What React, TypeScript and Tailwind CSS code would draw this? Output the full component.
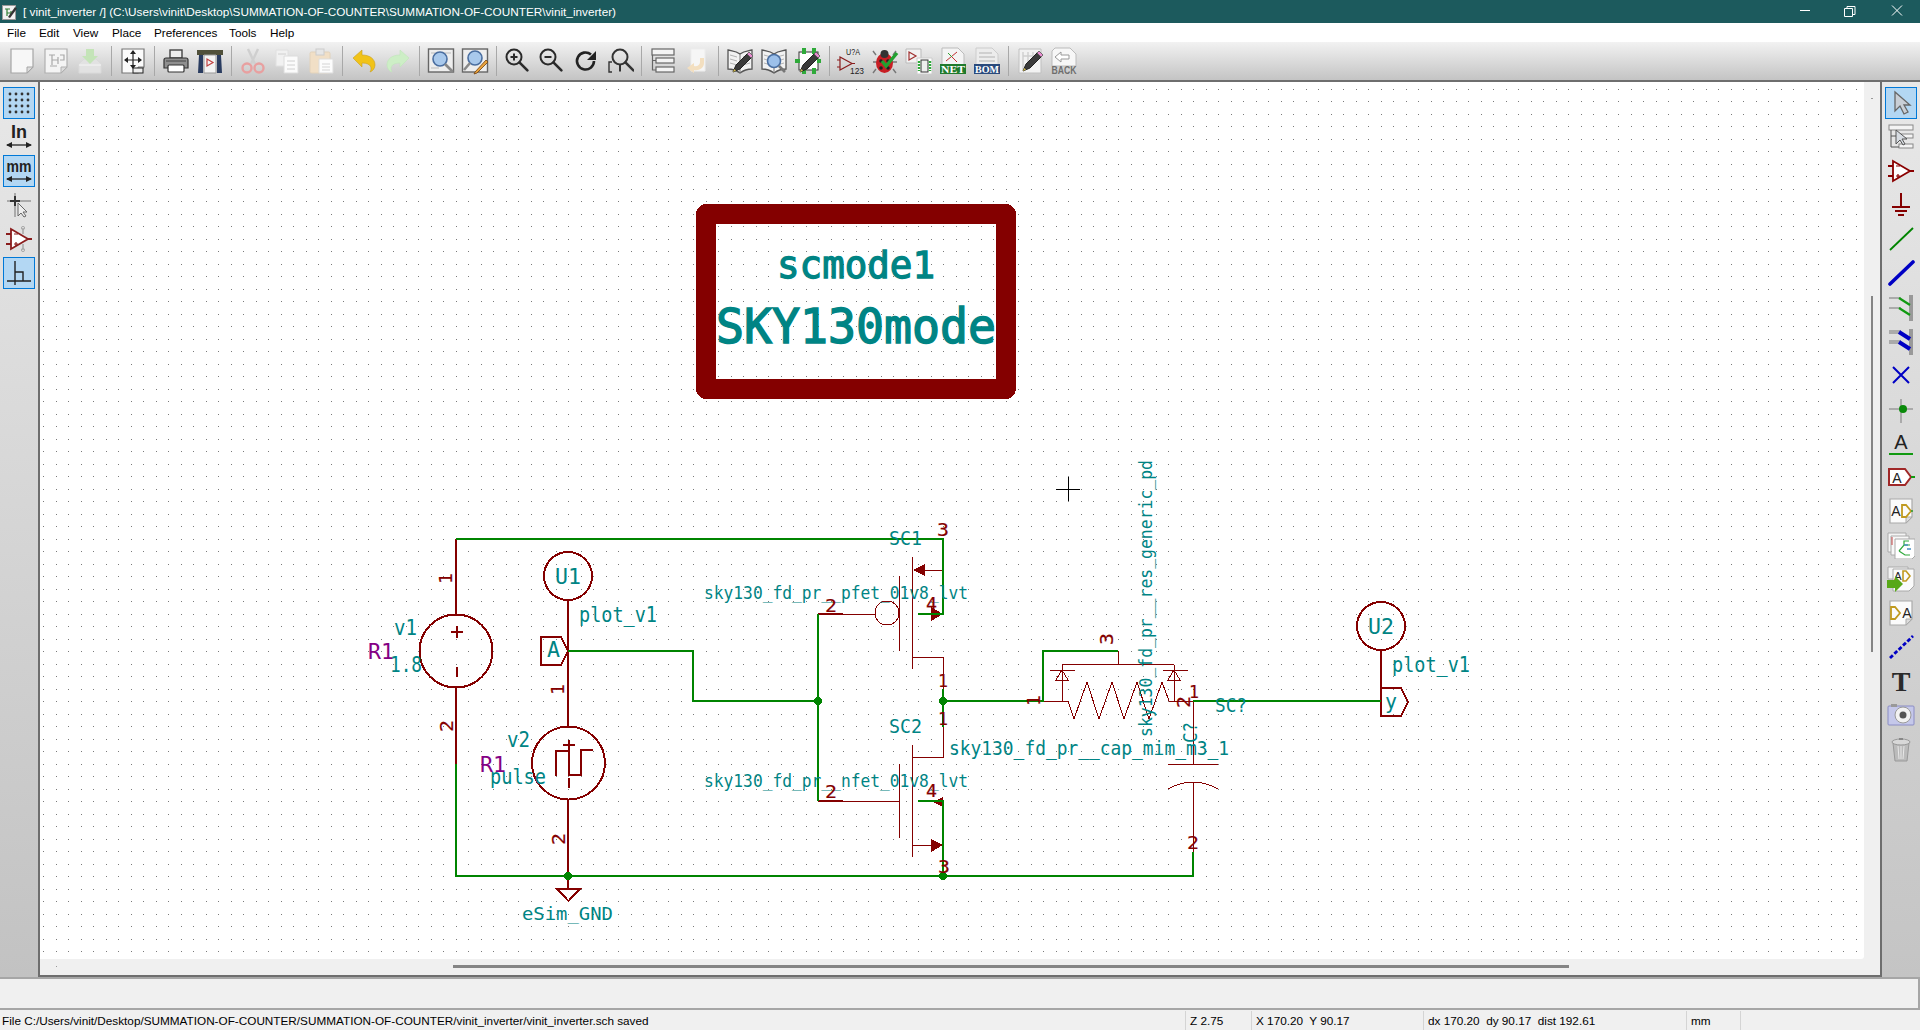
import React from "react";

const Ic = ({ children, s = 28 }: { children: React.ReactNode; s?: number }) => (
  <svg width={s} height={s} viewBox="0 0 28 28" className="block">{children}</svg>
);
const MONO = "'DejaVu Sans Mono', monospace";
const SANS = "'Liberation Sans', sans-serif";
const SERIF = "'Liberation Serif', serif";

const Page = ({ f = "#f8f8f8", st = "#a8a8a8" }: { f?: string; st?: string }) => (
  <>
    <path d="M3 2h22v18l-6 6H3z" fill={f} stroke={st} strokeWidth="1.2" />
    <path d="M25 20h-6v6z" fill="#dcdcdc" stroke={st} strokeWidth="1" />
  </>
);
const Mag = ({ x = 12, y = 11, r = 7, c = "#222", w = 2.2, fill = "none" }: any) => (
  <>
    <circle cx={x} cy={y} r={r} fill={fill} stroke={c} strokeWidth={w} />
    <path d={`M${x + r * 0.72} ${y + r * 0.72}l8 8`} stroke={c} strokeWidth={w + 0.6} strokeLinecap="round" />
  </>
);
const Pencil = ({ x = 0, y = 0 }: { x?: number; y?: number }) => (
  <g transform={`translate(${x} ${y})`}>
    <path d="M6 24l3-7L20 6l4 4L13 21z" fill="#3a3a3a" stroke="#222" strokeWidth="1" />
    <path d="M20 6l2-2 4 4-2 2z" fill="#e98bd0" stroke="#555" strokeWidth=".8" />
    <path d="M6 24l1.2-3 1.8 1.8z" fill="#d8c050" />
  </g>
);
const Book = () => (
  <>
    <path d="M14 7C10 4 6 4 2 3v19c4 0 8 1 12 4 4-3 8-4 12-4V3c-4 1-8 1-12 4z" fill="#f2f2f2" stroke="#555" strokeWidth="1.3" />
    <path d="M14 7v19" stroke="#777" strokeWidth="1" />
    <path d="M4 8l7 2M4 12l7 2M4 16l7 2M17 10l7-2M17 14l7-2M17 18l7-2" stroke="#aaa" strokeWidth=".9" />
  </>
);
const Opamp = ({ c = "#8a1c1c" }: { c?: string }) => (
  <>
    <path d="M6 4v20l17-10z" fill="#fff" stroke={c} strokeWidth="1.8" />
    <path d="M1 9h5M1 19h5M23 14h4" stroke={c} strokeWidth="1.8" />
    <path d="M9 9h4M9 19h4M11 17v4" stroke={c} strokeWidth="1.2" />
  </>
);

const topIcons: (React.ReactNode | null)[] = [
  <Page f="#f7f7f7" st="#a6a6a6" />,
  <>
    <Page f="#f4f4f4" st="#b0b0b0" />
    <path d="M7 8h6M10 8v10M10 13h6M16 10v7M18 8h4v5h-4M8 19h7" stroke="#a8a8a8" strokeWidth="1.2" fill="none" />
  </>,
  <>
    <path d="M3 17l5-5h12l5 5v9H3z" fill="#e2e2e2" stroke="#dadada" />
    <path d="M3 18h22" stroke="#f5f5f5" />
    <path d="M10 2h8v7h4l-8 8-8-8h4z" fill="#c4e4b8" />
  </>,
  null,
  <>
    <Page f="#fbfbfb" st="#777" />
    <path d="M14 4v17M6 13h16" stroke="#222" strokeWidth="1.2" />
    <path d="M14 3l-3 4h6zM14 22l-3-4h6zM5 13l4-3v6zM23 13l-4-3v6z" fill="#222" />
    <rect x="14" y="21" width="10" height="5" fill="#eee" stroke="#222" />
  </>,
  null,
  <>
    <rect x="8" y="3" width="12" height="8" fill="#eee" stroke="#444" strokeWidth="1.4" />
    <path d="M4 11h20a2 2 0 0 1 2 2v8H2v-8a2 2 0 0 1 2-2z" fill="#8f8f8f" stroke="#333" strokeWidth="1.2" />
    <rect x="6" y="18" width="16" height="7" rx="1" fill="#fff" stroke="#333" strokeWidth="1.2" />
    <path d="M4 14h20" stroke="#444" />
  </>,
  <>
    <rect x="1" y="3" width="26" height="5" fill="#50503a" />
    <path d="M3 8h4v18H2zM21 8h4l1 18h-5z" fill="#2a3c60" />
    <path d="M8 8h12v18H8z" fill="#f4f4f4" stroke="#999" />
    <path d="M11 12v7l6-3.5z" fill="none" stroke="#c04040" strokeWidth="1.2" />
  </>,
  null,
  <>
    <path d="M9 2l7 15M19 2l-7 15" stroke="#cfcfcf" strokeWidth="2.4" />
    <circle cx="8" cy="21" r="4.5" fill="none" stroke="#e8a0a0" strokeWidth="2.4" />
    <circle cx="20" cy="21" r="4.5" fill="none" stroke="#e8a0a0" strokeWidth="2.4" />
  </>,
  <>
    <path d="M3 3h12v16H3z" fill="#f1f1f1" stroke="#e0e0e0" />
    <path d="M11 9h14v17H11z" fill="#fbfbfb" stroke="#dcdcdc" />
    <path d="M14 14h8M14 18h8M14 22h8M5 7h8" stroke="#d0d0d0" />
  </>,
  <>
    <rect x="3" y="5" width="20" height="21" rx="1.5" fill="#f1dfc6" stroke="#e2d2ba" />
    <rect x="9" y="2" width="8" height="6" fill="#e6e6e6" stroke="#ccc" />
    <path d="M12 12h14v14H12z" fill="#fcfcfc" stroke="#ddd" />
    <path d="M15 17h8M15 20h8M15 23h8" stroke="#d4d4d4" />
  </>,
  null,
  <>
    <path d="M3 11L12 3v5c8 0 13 4 13 10 0 3-2 6-5 7 2-3 2-9-8-9v4z" fill="#f1c318" stroke="#c8a020" strokeWidth=".6" />
  </>,
  <>
    <path d="M25 11L16 3v5C8 8 3 12 3 18c0 3 2 6 5 7-2-3-2-9 8-9v4z" fill="#cdeec6" stroke="#bfe6b8" strokeWidth=".6" />
  </>,
  null,
  <>
    <rect x="1.5" y="2" width="25" height="23" fill="#eee" stroke="#666" strokeWidth="1.4" />
    <path d="M4 6h20M4 21h8" stroke="#bbb" />
    <circle cx="13" cy="12" r="7" fill="#a9c9ec" stroke="#4a6ea0" strokeWidth="1.6" />
    <path d="M18 17l8 8" stroke="#888" strokeWidth="2.6" />
  </>,
  <>
    <rect x="1.5" y="2" width="25" height="23" fill="#eee" stroke="#666" strokeWidth="1.4" />
    <circle cx="14" cy="11" r="7" fill="#a9c9ec" stroke="#4a6ea0" strokeWidth="1.6" />
    <path d="M9 16l-6 7" stroke="#888" strokeWidth="2.6" />
    <path d="M14 25L25 13l2 2-11 11-3 1z" fill="#e8a23c" stroke="#704010" strokeWidth=".8" />
  </>,
  null,
  <>
    <Mag x={10} y={10} r={7.5} c="#2a2a2a" w={2} />
    <path d="M6.500 10h7M10 6.500v7" stroke="#2a2a2a" strokeWidth="2" />
  </>,
  <>
    <Mag x={10} y={10} r={7.5} c="#2a2a2a" w={2} />
    <path d="M6.500 10h7" stroke="#2a2a2a" strokeWidth="2" />
  </>,
  <>
    <path d="M22 14a8.5 8.5 0 1 1-3-6.5" fill="none" stroke="#222" strokeWidth="2.6" />
    <path d="M24 4v9h-9z" fill="#222" />
  </>,
  <>
    <path d="M6 15H3v10h3" fill="none" stroke="#333" strokeWidth="1.4" />
    <Mag x={14} y={10} r={7.5} c="#333" w={2} />
    <path d="M14 17.500v7" stroke="#333" strokeWidth="2" />
  </>,
  null,
  <>
    <rect x="3" y="2" width="22" height="6" fill="#f4f4f4" stroke="#666" strokeWidth="1.2" />
    <rect x="7" y="11" width="18" height="5" fill="#f4f4f4" stroke="#666" strokeWidth="1.2" />
    <rect x="7" y="20" width="18" height="5" fill="#f4f4f4" stroke="#666" strokeWidth="1.2" />
    <path d="M3.500 8v15H7M3.500 13.500H7" fill="none" stroke="#666" strokeWidth="1.2" />
  </>,
  <>
    <path d="M8 2h14v22H8z" fill="#f6f6f6" stroke="#ededed" />
    <path d="M21 11v5c0 5-5 8-10 7v3l-7-5 7-5v3c3 1 6-1 6-4v-4z" fill="#f3dfc0" />
  </>,
  null,
  <>
    <Book />
    <Pencil x={1} y={1} />
  </>,
  <>
    <Book />
    <circle cx="14" cy="14" r="6.5" fill="#9cc0ea" stroke="#4a6ea0" strokeWidth="1.6" />
    <path d="M19 19l6 6" stroke="#777" strokeWidth="2.6" />
  </>,
  <>
    <rect x="5" y="5" width="19" height="18" fill="#fff" stroke="#333" />
    <path d="M8 1h4v6H8zM18 1h4v6h-4zM8 21h4v6H8zM18 21h4v6h-4zM1 12h5v4H1zM23 12h4v4h-4z" fill="#2faa3a" />
    <Pencil x={0} y={1} />
  </>,
  null,
  <>
    <path d="M3 10v13l12-6.500z" fill="none" stroke="#8a1c1c" strokeWidth="1.2" />
    <path d="M0 13h3M0 20h3M15 16.500h3" stroke="#8a1c1c" strokeWidth="1.2" />
    <text x="9" y="8" fontFamily={SANS} fontSize="8.500" fill="#222" textLength="14" lengthAdjust="spacingAndGlyphs">U?A</text>
    <text x="13" y="27" fontFamily={SANS} fontSize="8.500" fill="#222" textLength="14" lengthAdjust="spacingAndGlyphs">123</text>
  </>,
  <>
    <path d="M5 8L2 4M22 8l3-4M2 15h4M21 15h5M5 22l-3 4M22 22l3 4" stroke="#777" strokeWidth="1.4" />
    <ellipse cx="13.500" cy="16" rx="8.500" ry="10" fill="#c81e24" />
    <circle cx="13.500" cy="7" r="4" fill="#333" />
    <circle cx="10" cy="14" r="1.800" fill="#222" /><circle cx="17" cy="14" r="1.800" fill="#222" /><circle cx="10" cy="21" r="1.800" fill="#222" /><circle cx="17" cy="21" r="1.800" fill="#222" />
    <path d="M11 14l4 5 11-13" fill="none" stroke="#22a030" strokeWidth="3.4" />
  </>,
  <>
    <path d="M1 2h15v14H1z" fill="#f2f2f2" stroke="#bbb" />
    <path d="M4 5v8l7-4z" fill="none" stroke="#a03030" strokeWidth="1.2" />
    <path d="M12 11h15v16H12z" fill="#fff" stroke="#ccc" />
    <rect x="16" y="13" width="7" height="12" fill="#eee" stroke="#333" />
    <path d="M14 14v10M25 14v10" stroke="#2faa3a" strokeWidth="2.4" strokeDasharray="2 1" />
  </>,
  <>
    <path d="M3 1h16l6 6v11H3z" fill="#f4f4f4" stroke="#bbb" />
    <path d="M7 14L18 5M9 6l9 9" stroke="#c03030" strokeWidth="1" />
    <path d="M9 6l4 4" stroke="#30a030" strokeWidth="1" />
    <rect x="1" y="17" width="26" height="10" fill="#1f7a2c" />
    <text x="14" y="26" textAnchor="middle" fontFamily={SERIF} fontWeight="700" fontSize="11" fill="#fff" textLength="24" lengthAdjust="spacingAndGlyphs">NET</text>
  </>,
  <>
    <path d="M3 1h16l6 6v11H3z" fill="#ececec" stroke="#ccc" />
    <path d="M6 6h13M6 10h16M6 14h16" stroke="#cfcfcf" strokeWidth="2" />
    <rect x="1" y="17" width="26" height="10" fill="#2a4a7c" />
    <text x="14" y="26" textAnchor="middle" fontFamily={SERIF} fontWeight="700" fontSize="11" fill="#fff" textLength="24" lengthAdjust="spacingAndGlyphs">BOM</text>
  </>,
  null,
  <>
    <path d="M3 2h22v24H3z" fill="#f2f2f2" stroke="#c0c0c0" />
    <path d="M7 5v18M12 5v10M17 5v8M7 9h10M21 5v6" stroke="#cfcfcf" strokeWidth="1.4" fill="none" />
    <Pencil x={1} y={0} />
  </>,
  <>
    <path d="M5 1h15l6 6v12H2V4z" fill="#f7f7f7" stroke="#bbb" />
    <path d="M5 10l6-5v3h8v4h-8v3z" fill="#fff" stroke="#999" />
    <text x="14" y="27" textAnchor="middle" fontFamily={SANS} fontWeight="700" fontSize="10" fill="#6e6e6e" textLength="25" lengthAdjust="spacingAndGlyphs">BACK</text>
  </>,
];

const leftIcons = [
  {
    on: true,
    el: (
      <>
        {[6, 12, 18, 24].map((y) =>
          [5, 11, 17, 23].map((x) => <circle key={x + "-" + y} cx={x} cy={y - 1} r="1.400" fill="#333" />)
        )}
      </>
    ),
  },
  {
    on: false,
    el: (
      <>
        <text x="14" y="15" textAnchor="middle" fontFamily={SANS} fontWeight="700" fontSize="18" fill="#222">In</text>
        <path d="M2 22h24" stroke="#222" strokeWidth="1.300" /><path d="M1 22l6-3v6zM27 22l-6-3v6z" fill="#222" />
      </>
    ),
  },
  {
    on: true,
    el: (
      <>
        <text x="14" y="15" textAnchor="middle" fontFamily={SANS} fontWeight="700" fontSize="17" fill="#222" textLength="25" lengthAdjust="spacingAndGlyphs">mm</text>
        <path d="M2 22h24" stroke="#222" strokeWidth="1.300" /><path d="M1 22l6-3v6zM27 22l-6-3v6z" fill="#222" />
      </>
    ),
  },
  {
    on: false,
    el: (
      <>
        <path d="M2 10h24M10 2v24" stroke="#aaa" strokeWidth="2" />
        <path d="M5 10h10M10 5v10" stroke="#333" strokeWidth="2" />
        <path d="M13 12v13l3-3 3 4 2-1-3-4h4z" fill="#eee" stroke="#666" />
      </>
    ),
  },
  {
    on: false,
    el: (
      <>
        <path d="M18 3v6M18 19v6" stroke="#aaa" strokeWidth="1.600" /><circle cx="18" cy="3" r="1.600" fill="none" stroke="#aaa" /><circle cx="18" cy="25" r="1.600" fill="none" stroke="#aaa" />
        <path d="M6 4v20l17-10z" fill="#fff" stroke="#8a1c1c" strokeWidth="1.800" />
        <path d="M1 9h5M1 19h5M23 14h4" stroke="#8a1c1c" strokeWidth="1.800" />
        <path d="M9 9h4M9 19h4M11 17v4" stroke="#8a1c1c" strokeWidth="1.200" />
      </>
    ),
  },
  {
    on: true,
    el: <path d="M10 2v24M2 22h24M10 13h8v9" fill="none" stroke="#222" strokeWidth="1.400" />,
  },
];

const SmallAD = ({ rev = false }: { rev?: boolean }) => (
  <>
    <Page f="#fbfbfb" st="#aaa" />
    {rev ? (
      <>
        <path d="M4 8h4l5 6-5 6H4z" fill="none" stroke="#c09a20" strokeWidth="1.800" />
        <text x="20" y="19" textAnchor="middle" fontFamily={SANS} fontSize="14" fill="#222">A</text>
      </>
    ) : (
      <>
        <text x="9" y="19" textAnchor="middle" fontFamily={SANS} fontSize="14" fill="#222">A</text>
        <path d="M15 8h4l5 6-5 6h-4z" fill="none" stroke="#c09a20" strokeWidth="1.800" />
        <path d="M24 14h2" stroke="#2a9a30" strokeWidth="1.600" />
      </>
    )}
  </>
);

const rightIcons: { on?: boolean; el: React.ReactNode }[] = [
  { on: true, el: <path d="M8 3v19l5-5 4 8 4-2-4-7h6z" fill="#c9cfd6" stroke="#666" strokeWidth="1.300" /> },
  {
    el: (
      <>
        <rect x="2" y="2" width="24" height="5" fill="#f4f4f4" stroke="#888" />
        <rect x="12" y="11" width="14" height="4" fill="#f4f4f4" stroke="#888" />
        <rect x="12" y="21" width="14" height="4" fill="#f4f4f4" stroke="#888" />
        <path d="M4 7v17h8M4 13h8" fill="none" stroke="#555" />
        <path d="M9 7v14l4-4 3 5 2-1-3-5h5z" fill="#d7dce2" stroke="#555" />
      </>
    ),
  },
  { el: <Opamp c="#8a0000" /> },
  {
    el: (
      <>
        <path d="M14 2v14M5 16h18M8 20h12" stroke="#840000" strokeWidth="2" />
        <path d="M11 24h6" stroke="#840000" strokeWidth="2" />
      </>
    ),
  },
  { el: <path d="M3 25L26 3" stroke="#008400" strokeWidth="1.800" /> },
  { el: <path d="M3 25L26 3" stroke="#0000c4" strokeWidth="3.600" strokeLinecap="round" /> },
  {
    el: (
      <>
        <path d="M2 5h12M2 15h12" stroke="#aaa" strokeWidth="2" /><path d="M24 2v26" stroke="#999" strokeWidth="4" />
        <path d="M12 5l11 7M12 15l11 7" stroke="#119a11" strokeWidth="2.200" />
      </>
    ),
  },
  {
    el: (
      <>
        <path d="M2 5h12M2 15h12" stroke="#aaa" strokeWidth="4" /><path d="M24 2v26" stroke="#999" strokeWidth="4" />
        <path d="M12 5l11 7M12 15l11 7" stroke="#0000c4" strokeWidth="4" />
      </>
    ),
  },
  { el: <path d="M6 6l16 16M22 6L6 22" stroke="#0000c4" strokeWidth="2" /> },
  {
    el: (
      <>
        <path d="M2 14h24M14 4v24" stroke="#aaa" strokeWidth="2" />
        <circle cx="16" cy="14" r="4" fill="#0a8a0a" />
      </>
    ),
  },
  {
    el: (
      <>
        <text x="14" y="20" textAnchor="middle" fontFamily={SANS} fontSize="20" fill="#222">A</text>
        <path d="M2 25h24" stroke="#119a11" strokeWidth="2" />
      </>
    ),
  },
  {
    el: (
      <>
        <path d="M2 6h16l6 8-6 8H2z" fill="#fff" stroke="#a02828" strokeWidth="2" />
        <path d="M24 14h4" stroke="#119a11" strokeWidth="2" />
        <text x="10" y="20" textAnchor="middle" fontFamily={SANS} fontSize="14" fill="#222">A</text>
      </>
    ),
  },
  { el: <SmallAD /> },
  {
    el: (
      <>
        <path d="M1 2h18v19H1z" fill="#f4f4f4" stroke="#aaa" />
        <path d="M4 5h18v19H4z" fill="#f8f8f8" stroke="#aaa" />
        <path d="M8 8h20v17l-3 3H8z" fill="#fff" stroke="#aaa" />
        <path d="M5 6v8" stroke="#c04040" />
        <path d="M12 20l5-6h6M17 14v-4h5M12 20l6 4h5" fill="none" stroke="#2faa3a" strokeWidth="1.200" />
        <path d="M17 14h4M20 18h4" stroke="#4a90c0" strokeWidth="1.600" />
      </>
    ),
  },
  {
    el: (
      <>
        <path d="M1 2h20v12H1z" fill="#f4f4f4" stroke="#aaa" />
        <path d="M6 4h21v17l-5 5H6z" fill="#fbfbfb" stroke="#aaa" />
        <text x="11" y="15" textAnchor="middle" fontFamily={SANS} fontSize="11" fill="#222">A</text>
        <path d="M16 6h3l4 5-4 5h-3z" fill="none" stroke="#c09a20" strokeWidth="1.600" />
        <path d="M0 15h8v-4l8 8-8 8v-4H0z" fill="#58a818" />
      </>
    ),
  },
  { el: <SmallAD rev /> },
  { el: <path d="M3 25L26 3" stroke="#0000c4" strokeWidth="2.800" strokeDasharray="4 2" /> },
  {
    el: <text x="14" y="24" textAnchor="middle" fontFamily={SERIF} fontWeight="700" fontSize="28" fill="#2a2a2a">T</text>,
  },
  {
    el: (
      <>
        <rect x="1" y="5" width="26" height="19" rx="1" fill="#c5c8ea" stroke="#8a8cc4" />
        <rect x="4" y="3" width="6" height="3" fill="#999" />
        <circle cx="16" cy="14" r="8" fill="#f2f2f2" stroke="#999" />
        <circle cx="16" cy="14" r="3.500" fill="#555" />
      </>
    ),
  },
  {
    el: (
      <>
        <path d="M6 8h16l-2 18H8z" fill="#bbb" stroke="#999" />
        <ellipse cx="14" cy="7" rx="9" ry="3" fill="#d8d8d8" stroke="#999" />
        <path d="M11 11l1 13M17 11l-1 13M14 11v13" stroke="#e8e8e8" />
        <path d="M12 4h4" stroke="#888" strokeWidth="2" />
      </>
    ),
  },
];

const TEAL = "#008484";
const RED = "#840000";
const GREEN = "#008400";
const PURPLE = "#840084";

const L = ({ x, y, t, len, size = 18, c = TEAL, rot = false, sw = 0 }: any) => (
  <text
    x={x}
    y={y}
    fontFamily={MONO}
    fontSize={size}
    fill={c}
    stroke={sw ? c : undefined}
    strokeWidth={sw || undefined}
    textLength={len}
    lengthAdjust="spacingAndGlyphs"
    transform={rot ? `rotate(-90 ${x} ${y})` : undefined}
  >
    {t}
  </text>
);

const dotPath = (() => {
  let d = "";
  for (let j = 0; j < 71; j++) {
    for (let i = 0; i < 147; i++) {
      const x = Math.floor(43.5 + i * 12.5);
      const y = Math.floor(89 + j * 12.5);
      d += `M${x} ${y}h1v1h-1z`;
    }
  }
  return d;
})();

const Schematic = () => (
  <svg width={1824} height={877} viewBox="40 82 1824 877" className="block" shapeRendering="crispEdges">
    <path d={dotPath} fill="#7a7a7a" />

    {/* sheet symbol */}
    <rect x="706" y="214" width="300" height="175" fill="none" stroke={RED} strokeWidth="20" strokeLinejoin="round" />
    <L x={777} y={278} t="scmode1" len={158} size={38} sw={1.3} />
    <L x={716} y={343} t="SKY130mode" len={280} size={48} sw={1.5} />

    {/* component pins, thick */}
    <g fill="none" stroke={RED} strokeWidth="2">
      <circle cx="456" cy="651" r="36.500" />
      <path d="M456 539V614M456 688V764" />
      <path d="M451 632h12M457 626v12M457 667v10" strokeWidth="1.500" />
      <circle cx="568" cy="576" r="24" />
      <path d="M568 600V726M568 800V889" />
      <path d="M541 637h20l7 14-7 14h-20z" />
      <circle cx="568.500" cy="763" r="36.500" />
      <path d="M563 745h12M569 740v10M569 778v10" strokeWidth="1.500" />
      <path d="M556 776V751H569V775H581V750H593" />
      <path d="M557 889h23l-11.500 12z" />
      <path d="M818 614H843M818 801H843" />
      <circle cx="1381" cy="626" r="24" />
      <path d="M1381 650V702" />
      <path d="M1381 688h20l7 14-7 14h-20z" />
    </g>

    {/* thin device drawing */}
    <g fill="none" stroke={RED} strokeWidth="1">
      <circle cx="887" cy="613" r="12" />
      <path d="M843 614H875M899 576V651M912 557V669M925 570H943M912 657H943V689" />
      <path d="M843 801H899M899 764V838M912 745V857M912 757H943V727M912 845H931" />
      <path d="M1118 651V664.500M1062 664.500H1174M1062 664.500V701M1174 664.500V701M1050 670H1075M1163 670H1188" />
      <path d="M1062 670L1056 680H1068ZM1174 670L1168 680H1180Z" />
      <path d="M1043 701H1068L1074 719L1087 682L1099 719L1112 682L1124 719L1137 682L1149 719L1162 682L1169 701H1193" />
      <path d="M1193 701V764M1168 764H1218M1193 782V852M1168 789Q1193 775 1218 789" />
    </g>
    <g fill={RED}>
      <path d="M913 570l12-6v12zM931 607l12 7-12 7zM931 839l12 6-12 7zM933 802l10-5v10z" />
    </g>

    {/* wires */}
    <g fill="none" stroke={GREEN} strokeWidth="2">
      <path d="M456 539H943V614H918" />
      <path d="M456 764V876H1193V852" />
      <path d="M568 651H693V701H818" />
      <path d="M818 614V801" />
      <path d="M943 689V727" />
      <path d="M943 701H1043V651H1118" />
      <path d="M1193 701H1381" />
      <path d="M918 801H943V876" />
    </g>
    <g fill={GREEN}>
      <circle cx="818" cy="701" r="4" />
      <circle cx="943" cy="701" r="4" />
      <circle cx="568" cy="876" r="4" />
      <circle cx="943" cy="876" r="4" />
    </g>

    {/* crosshair */}
    <path d="M1056 489H1080M1068 477V501" stroke="#000" strokeWidth="1" fill="none" />

    {/* labels */}
    <L x={394} y={635} t="v1" len={23} size={21} />
    <L x={368} y={659} t="R1" len={26} size={21} c={PURPLE} />
    <L x={390} y={672} t="1.8" len={32} size={21} />
    <L x={555} y={584} t="U1" len={26} size={21} />
    <L x={579} y={622} t="plot_v1" len={78} size={21} />
    <L x={547} y={657} t="A" len={13} size={21} />
    <L x={507} y={747} t="v2" len={23} size={21} />
    <L x={480} y={772} t="R1" len={26} size={21} c={PURPLE} />
    <L x={490} y={784} t="pulse" len={56} size={21} />
    <L x={522} y={920} t="eSim_GND" len={91} size={18} />
    <L x={704} y={599} t="sky130_fd_pr__pfet_01v8_lvt" len={264} size={18} />
    <L x={704} y={787} t="sky130_fd_pr__nfet_01v8_lvt" len={264} size={18} />
    <L x={889} y={545} t="SC1" len={33} size={19} />
    <L x={889} y={733} t="SC2" len={33} size={19} />
    <L x={949} y={755} t="sky130_fd_pr__cap_mim_m3_1" len={280} size={19} />
    <L x={1152} y={737} t="sky130_fd_pr__res_generic_pd" len={277} size={18} rot />
    <L x={1215} y={712} t="SC?" len={32} size={19} />
    <L x={1197} y={743} t="C?" len={21} size={19} rot />
    <L x={1368} y={634} t="U2" len={26} size={21} />
    <L x={1392} y={672} t="plot_v1" len={78} size={21} />
    <L x={1385} y={709} t="y" len={12} size={21} />

    {/* pin numbers */}
    <L x={452} y={584} t="1" len={11} size={18} c={RED} rot sw={0.2} />
    <L x={453} y={732} t="2" len={12} size={18} c={RED} rot sw={0.2} />
    <L x={564} y={695} t="1" len={11} size={18} c={RED} rot sw={0.2} />
    <L x={565} y={845} t="2" len={12} size={18} c={RED} rot sw={0.2} />
    <L x={937} y={536} t="3" len={12} size={18} c={RED} sw={0.2} />
    <L x={825} y={612} t="2" len={12} size={18} c={RED} sw={0.2} />
    <L x={926} y={610} t="4" len={11} size={18} c={RED} sw={0.2} />
    <L x={938} y={687} t="1" len={10} size={18} c={RED} sw={0.2} />
    <L x={938} y={725} t="1" len={10} size={18} c={RED} sw={0.2} />
    <L x={825} y={798} t="2" len={12} size={18} c={RED} sw={0.2} />
    <L x={926} y={797} t="4" len={11} size={18} c={RED} sw={0.2} />
    <L x={938} y={873} t="3" len={12} size={18} c={RED} sw={0.2} />
    <L x={1187} y={849} t="2" len={12} size={18} c={RED} sw={0.2} />
    <L x={1189} y={698} t="1" len={10} size={18} c={RED} sw={0.2} />
    <L x={1040} y={706} t="1" len={11} size={18} c={RED} rot sw={0.2} />
    <L x={1113} y={645} t="3" len={12} size={18} c={RED} rot sw={0.2} />
    <L x={1190} y={708} t="2" len={12} size={18} c={RED} rot sw={0.2} />
  </svg>
);

const Slot = ({ children, on }: { children: React.ReactNode; on?: boolean }) => (
  <div className={`flex h-[32px] w-[32px] shrink-0 items-center justify-center ${on ? "border border-[#0078d7] bg-[#b3d7f3]" : ""}`}>
    {children}
  </div>
);

export default function App() {
  const menu: [string, string][] = [
    ["File", "w-[32px]"],
    ["Edit", "w-[34px]"],
    ["View", "w-[39px]"],
    ["Place", "w-[42px]"],
    ["Preferences", "w-[75px]"],
    ["Tools", "w-[41px]"],
    ["Help", "w-[40px]"],
  ];
  return (
    <div className="flex h-[1030px] w-[1920px] flex-col overflow-hidden bg-[#f0f0f0] font-['Liberation_Sans',sans-serif] text-[11.75px] text-black">
      {/* title bar */}
      <div className="flex h-[23px] shrink-0 items-center bg-[#1c5a5d] text-white">
        <div className="ml-[2px] mr-[6px] w-[15px]">
          <svg width="15" height="16" viewBox="0 0 15 16">
            <rect x="0.500" y="1.500" width="13" height="14" fill="#f2f2f2" stroke="#999" />
            <path d="M3 5h5M5 5v7M5 9h4M9 7v4" stroke="#2e7d32" strokeWidth="1.200" fill="none" />
            <path d="M6 13L13 3l2 1.500L8 14z" fill="#333" />
          </svg>
        </div>
        <div className="flex-1 whitespace-nowrap">
          {"[ vinit_inverter /] (C:\\Users\\vinit\\Desktop\\SUMMATION-OF-COUNTER\\SUMMATION-OF-COUNTER\\vinit_inverter)"}
        </div>
        <div className="flex items-center">
          <svg width="46" height="23" viewBox="0 0 46 23"><path d="M18 10.500h10" stroke="#fff" /></svg>
          <svg width="46" height="23" viewBox="0 0 46 23" fill="none" stroke="#fff">
            <path d="M16.500 8.500h8v8h-8zM19 8.500V6.500h8v8h-2.500" />
          </svg>
          <svg width="46" height="23" viewBox="0 0 46 23" fill="none" stroke="#fff"><path d="M18 5.500l10 10M28 5.500l-10 10" /></svg>
        </div>
      </div>

      {/* menu */}
      <div className="flex h-[19px] shrink-0 items-center bg-white pl-[7px]">
        {menu.map(([m, w]) => (
          <div key={m} className={w}>{m}</div>
        ))}
      </div>

      {/* top toolbar */}
      <div className="flex h-[40px] shrink-0 items-center border-b-2 border-[#6e6e6e] bg-gradient-to-b from-[#f2f2f2] to-[#c4c4c4] pl-[5px]">
        {topIcons.map((ic, i) =>
          ic === null ? (
            <div key={i} className="flex h-[30px] w-[9px] shrink-0 justify-center">
              <div className="h-full w-px bg-[#a8a8a8]" />
            </div>
          ) : (
            <div key={i} className="flex h-[32px] w-[34px] shrink-0 items-center justify-center">
              <Ic>{ic}</Ic>
            </div>
          )
        )}
      </div>

      {/* main */}
      <div className="flex min-h-0 flex-1">
        <div className="flex w-[38px] shrink-0 flex-col items-center gap-[2px] bg-gradient-to-b from-[#e8e8e8] to-[#c2c2c2] pt-[5px]">
          {leftIcons.map((b, i) => (
            <Slot key={i} on={b.on}>
              <Ic>{b.el}</Ic>
            </Slot>
          ))}
        </div>
        <div className="flex min-w-0 flex-1 flex-col border-x-2 border-b-2 border-l-[#6e6e6e] border-r-[#6e6e6e] border-b-[#6e6e6e] bg-[#f0f0f0]">
          <div className="relative flex-1 pb-[16px] pr-[16px]">
            <div className="h-[877px] w-[1824px] overflow-hidden rounded-br-[3px] bg-white">
              <Schematic />
            </div>
            <div className="absolute left-[413px] top-[883px] h-[3px] w-[1116px] bg-[#858585]" />
            <div className="absolute right-[7px] top-[214px] h-[356px] w-[2px] bg-[#858585]" />
            <div className="absolute left-[16px] top-[884px] h-[1px] w-[1px] bg-[#999]" />
            <div className="absolute right-[7px] top-[16px] h-[1px] w-[2px] bg-[#999]" />
          </div>
        </div>
        <div className="flex w-[38px] shrink-0 flex-col items-center gap-[2px] bg-gradient-to-b from-[#e8e8e8] to-[#c4c4c4] pt-[5px]">
          {rightIcons.map((b, i) => (
            <Slot key={i} on={b.on}>
              <Ic>{b.el}</Ic>
            </Slot>
          ))}
        </div>
      </div>

      {/* message panel */}
      <div className="h-[33px] shrink-0 border-2 border-l-0 border-[#a6a6a6] bg-[#f0f0f0]" />

      {/* status bar */}
      <div className="flex h-[20px] shrink-0 items-center bg-[#f0f0f0] pt-[1px]">
        <div className="w-[1185px] whitespace-nowrap pl-[2px]">
          File C:/Users/vinit/Desktop/SUMMATION-OF-COUNTER/SUMMATION-OF-COUNTER/vinit_inverter/vinit_inverter.sch saved
        </div>
        <div className="h-full w-[66px] border-l border-[#d4d4d4] pl-[4px] leading-[20px]">Z 2.75</div>
        <div className="h-full w-[172px] border-l border-[#d4d4d4] pl-[4px] leading-[20px] whitespace-pre">X 170.20  Y 90.17</div>
        <div className="h-full w-[263px] border-l border-[#d4d4d4] pl-[4px] leading-[20px] whitespace-pre">dx 170.20  dy 90.17  dist 192.61</div>
        <div className="h-full w-[54px] border-l border-[#d4d4d4] pl-[4px] leading-[20px]">mm</div>
        <div className="h-full flex-1 border-l border-[#d4d4d4]" />
      </div>
    </div>
  );
}
